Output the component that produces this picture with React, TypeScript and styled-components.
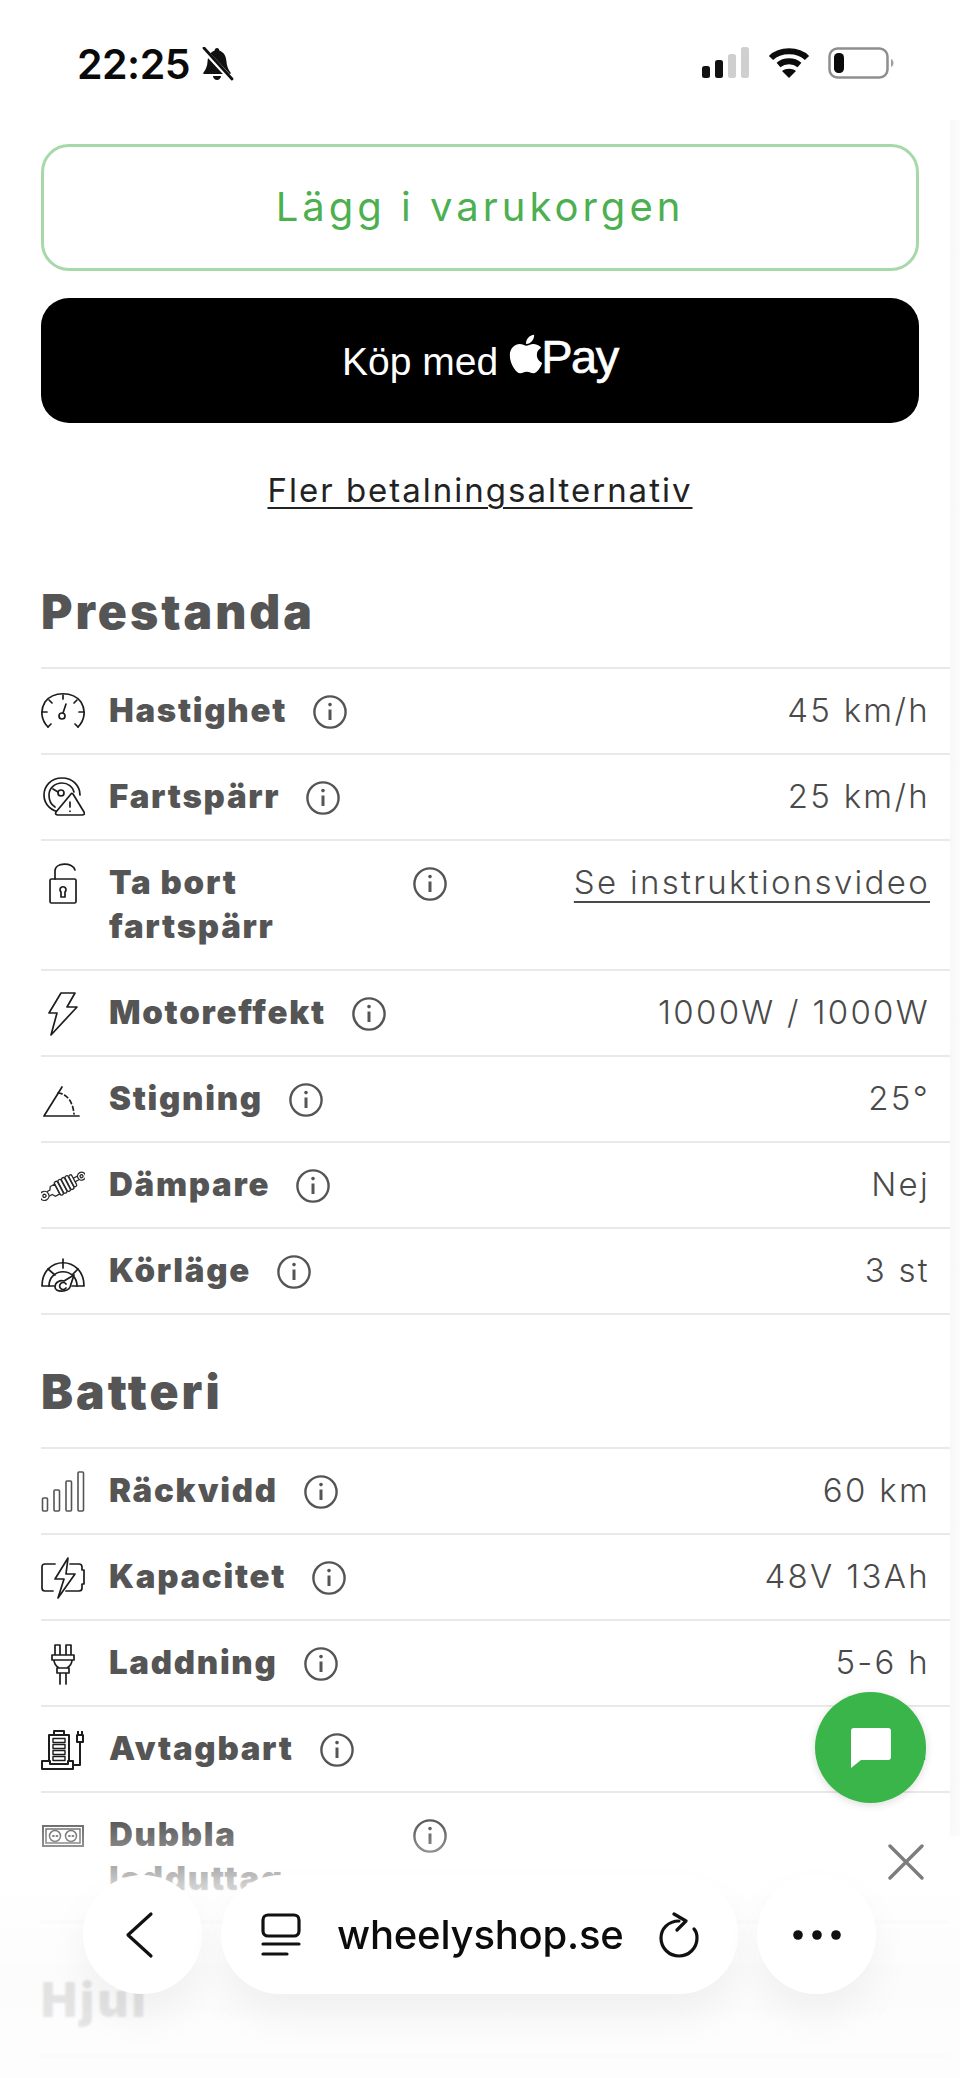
import React from "react";
import styled, { createGlobalStyle } from "styled-components";
import { FaApple } from "react-icons/fa";

const GlobalStyle = createGlobalStyle`
  html, body {
    margin: 0;
    padding: 0;
    background: #fff;
  }
  * { box-sizing: border-box; }
`;

const Page = styled.div`
  position: relative;
  width: 960px;
  height: 2078px;
  overflow: hidden;
  padding: 0 10px 0 41px;
  background: #fff;
  font-family: Inter, "Liberation Sans", sans-serif;
`;

const ScrollTrack = styled.div`
  position: absolute;
  top: 120px;
  right: 0;
  width: 10px;
  height: 1716px;
  background: linear-gradient(90deg, #f8f8f8, #fbfbfb);
`;

const StatusBar = styled.div`
  display: flex;
  align-items: flex-start;
  justify-content: space-between;
  height: 144px;
  padding: 40px 56px 0 36px;
`;

const Clock = styled.div`
  display: flex;
  align-items: center;
  gap: 10px;
  font-size: 41px;
  line-height: 48px;
  font-weight: 600;
  color: #0a0a0a;
  letter-spacing: -0.5px;
`;

const StatusIcons = styled.div`
  display: flex;
  align-items: center;
  gap: 18px;
  padding-top: 7px;
`;

const AddButton = styled.button`
  display: block;
  width: 878px;
  height: 127px;
  padding-bottom: 4px;
  border: 3px solid #a6d8a9;
  border-radius: 28px;
  background: #fff;
  color: #4caf50;
  font-family: inherit;
  font-size: 40px;
  font-weight: 400;
  letter-spacing: 4px;
`;

const PayButton = styled.button`
  display: flex;
  align-items: center;
  justify-content: center;
  width: 878px;
  height: 125px;
  margin-top: 27px;
  border: 0;
  border-radius: 28px;
  background: #000;
  color: #fff;
  font-family: "Liberation Sans", Arial, sans-serif;
  font-size: 39px;
`;

const PayLabel = styled.span`
  margin-top: 3px;
`;

const AppleMark = styled(FaApple)`
  width: 40px;
  height: 44px;
  margin: -14px -5px 0 8px;
`;

const PayWord = styled.span`
  font-size: 47px;
  margin-top: -9px;
  letter-spacing: -1.4px;
  -webkit-text-stroke: 0.7px #fff;
`;

const MoreLink = styled.a`
  display: block;
  width: 878px;
  height: 112px;
  padding-top: 42px;
  text-align: center;
  color: #222;
  font-size: 33px;
  line-height: 50px;
  letter-spacing: 2px;
  text-decoration: underline;
  text-decoration-thickness: 2px;
  text-underline-offset: 5px;
`;

const SectionTitle = styled.h2`
  margin: 0;
  height: 132px;
  padding-top: 49px;
  font-size: 48px;
  line-height: 56px;
  font-weight: 900;
  color: #555;
  letter-spacing: 3px;
`;

const SpecList = styled.div`
  border-top: 2px solid #e9e9e9;
`;

const SpecRow = styled.div`
  display: flex;
  align-items: flex-start;
  padding: 21px 20px 19px 0;
  border-bottom: 2px solid #e9e9e9;
`;

const SpecIconBox = styled.div`
  flex: 0 0 44px;
  display: flex;
  align-items: center;
  justify-content: center;
  height: 44px;
  margin-right: 24px;
`;

const SpecLabel = styled.div`
  max-width: 278px;
  margin: -2px 0 2px;
  font-size: 33px;
  line-height: 44px;
  font-weight: 900;
  color: #555;
  letter-spacing: 1.7px;
`;

const InfoBox = styled.div`
  flex: 0 0 34px;
  height: 43px;
  display: flex;
  align-items: center;
  margin-left: 26px;
`;

const SpecValue = styled.div<{ $link?: boolean }>`
  margin: -2px 0 2px auto;
  font-size: 33px;
  line-height: 44px;
  font-weight: 300;
  color: #4a4a4a;
  letter-spacing: 2.3px;
  text-align: right;
  text-decoration: ${(p) => (p.$link ? "underline" : "none")};
  text-decoration-thickness: 2px;
  text-underline-offset: 7px;
`;

const ChatBubble = styled.div`
  position: absolute;
  left: 815px;
  top: 1692px;
  width: 111px;
  height: 111px;
  display: flex;
  align-items: center;
  justify-content: center;
  border-radius: 50%;
  background: #39b54a;
  box-shadow: 0 2px 8px rgba(0, 0, 0, 0.14);
`;

const BrowserChrome = styled.div`
  position: absolute;
  left: 0;
  right: 0;
  bottom: 0;
  height: 260px;
  display: flex;
  gap: 19px;
  padding: 57px 0 0 83px;
  background: linear-gradient(
    180deg,
    rgba(255, 255, 255, 0) 0%,
    rgba(255, 255, 255, 0.2) 8%,
    rgba(255, 255, 255, 0.72) 26%,
    rgba(252, 252, 252, 0.84) 60%,
    rgba(253, 253, 253, 0.88) 100%
  );
  &::before {
    content: "";
    position: absolute;
    inset: 0;
    backdrop-filter: blur(1px);
    mask-image: linear-gradient(180deg, transparent 20%, #000 40%);
  }
`;

const RoundButton = styled.div<{ $nudge?: number }>`
  position: relative;
  width: 119px;
  height: 119px;
  display: flex;
  align-items: center;
  justify-content: center;
  padding-right: ${(p) => p.$nudge ?? 0}px;
  border-radius: 50%;
  background: #fff;
  box-shadow: 0 22px 44px rgba(0, 0, 0, 0.05);
`;

const UrlPill = styled.div`
  position: relative;
  width: 517px;
  height: 119px;
  display: flex;
  align-items: center;
  padding: 0 39px 0 40px;
  border-radius: 60px;
  background: #fff;
  box-shadow: 0 22px 44px rgba(0, 0, 0, 0.05);
`;

const UrlText = styled.span`
  margin: 0 auto 0 36px;
  font-size: 40px;
  font-weight: 500;
  color: #0c0c0c;
  letter-spacing: -0.2px;
`;

const CloseMark = styled.svg`
  position: absolute;
  top: 26px;
  right: 36px;
`;

const specStroke = { fill: "none", stroke: "#1d1d1d", strokeWidth: 1.7, strokeLinecap: "round", strokeLinejoin: "round" } as const;

const Gauge = () => (
  <svg width="44" height="44" viewBox="0 0 44 44" {...specStroke}>
    <path d="M7 37 C0 30 -1 20 4 12 C12 1 32 1 40 12 C45 20 44 30 37 37" />
    <path d="M7 37l3-3M37 37l-3-3M22 5v4M1 22h5M43 22h-5M8 10l3 3M36 10l-3 3" />
    <circle cx="21" cy="26" r="3" />
    <path d="M22 23l3-9" />
  </svg>
);

const GaugeWarn = () => (
  <svg width="44" height="44" viewBox="0 0 44 44" {...specStroke}>
    <path d="M21 36C10 36 3 28 3 19S10 2 21 2s18 8 18 17" />
    <path d="M14 31C9 28 8 24 8 19c0-7 6-12 13-12 6 0 11 4 12 9" />
    <circle cx="20" cy="17" r="3" />
    <path d="M17 16l-5-3" />
    <path d="M30 18L15 36c-1 2 0 3 2 3h24c2 0 3-1 2-3L32 18c-1-1-2-1-2 0z" fill="#fff" />
    <path d="M29 26v5M29 35v.3" />
  </svg>
);

const OpenLock = () => (
  <svg width="44" height="44" viewBox="0 0 44 44" {...specStroke}>
    <rect x="9" y="17" width="26" height="24" rx="1.5" />
    <path d="M14 17V9c0-9 18-9 20-1" />
    <path d="M20 35h4v-5a3 3 0 1 0-4 0z" />
  </svg>
);

const Bolt = () => (
  <svg width="44" height="44" viewBox="0 0 44 44" {...specStroke}>
    <path d="M20 1h14l-8 14h10L10 43l6-22H8z" />
  </svg>
);

const Slope = () => (
  <svg width="44" height="44" viewBox="0 0 44 44" {...specStroke}>
    <path d="M3 38h35M3 38L21 9" />
    <path d="M17 15c10 1 15 10 16 21" strokeDasharray="4 3" />
  </svg>
);

const Damper = () => (
  <svg width="44" height="44" viewBox="0 0 44 44" fill="none" stroke="#2a2a2a" strokeWidth="1.3" strokeLinecap="round">
    <g transform="rotate(-28 22 22)">
      <circle cx="1" cy="22" r="4.500" />
      <circle cx="1" cy="22" r="1.600" />
      <circle cx="43" cy="22" r="4" />
      <circle cx="43" cy="22" r="1.500" />
      <path d="M5.500 19.500h3l2-3h5v11h-5l-2-3h-3" />
      <rect x="15.500" y="14.500" width="3.600" height="15" rx="1.800" />
      <rect x="19.500" y="14.500" width="3.600" height="15" rx="1.800" />
      <rect x="23.500" y="14.500" width="3.600" height="15" rx="1.800" />
      <rect x="27.500" y="14.500" width="3.600" height="15" rx="1.800" />
      <rect x="31.500" y="15.500" width="3.200" height="13" rx="1.600" />
      <path d="M35 20h4M35 24h4" />
    </g>
  </svg>
);

const ModeDial = () => (
  <svg width="44" height="44" viewBox="0 0 44 44" {...specStroke}>
    <path d="M1 36C1 5 43 5 43 36h-12M1 36h12" />
    <path d="M8 36C8 17 36 17 36 36M22 9v9M7 19l7 6M37 19l-6 6" />
    <path d="M14 37c0-5 5-7 9-6l10-6-4 12c-2 5-15 6-15 0z" fill="#fff" />
    <path d="M25 34a3.5 3.5 0 1 0 0 4" />
  </svg>
);

const RangeBars = () => (
  <svg width="44" height="44" viewBox="0 0 44 44" fill="none" stroke="#555" strokeWidth="1.6">
    <rect x="1.5" y="28" width="5" height="13" rx="1" />
    <rect x="13" y="20" width="5.5" height="21" rx="1" />
    <rect x="25" y="11" width="5.5" height="30" rx="1" />
    <rect x="37" y="2" width="5.5" height="39" rx="1" />
  </svg>
);

const BatteryBolt = () => (
  <svg width="44" height="44" viewBox="0 0 44 44" {...specStroke}>
    <path d="M14 8H4c-2 0-3 1-3 3v21c0 2 1 3 3 3h8M29 8h9c2 0 3 1 3 3v3h2v14h-2v4c0 2-1 3-3 3H25" />
    <path d="M27 2L14 23h9l-6 19 17-24h-9z" />
  </svg>
);

const Plug = () => (
  <svg width="44" height="44" viewBox="0 0 44 44" {...specStroke}>
    <path d="M14 13V3h5v10M25 13V3h5v10M11 13h22v5H11zM13 18c0 4 2 6 5 8h8c3-2 5-4 5-8M16 26h12v5H16zM19 31v11M25 31v11" />
  </svg>
);

const DockBattery = () => (
  <svg width="44" height="44" viewBox="0 0 44 44" fill="none" stroke="#1d1d1d" strokeWidth="2" strokeLinejoin="round">
    <path d="M8 33V7h20v26M13 7V3h10v4" />
    <rect x="12" y="10.500" width="12" height="4" strokeWidth="1.400" />
    <rect x="12" y="16.500" width="12" height="4" strokeWidth="1.400" />
    <rect x="12" y="22.500" width="12" height="4" strokeWidth="1.400" />
    <rect x="12" y="28.500" width="12" height="4" strokeWidth="1.400" />
    <path d="M1 33h8v3h18v-3h5v8H1zM32 37h7V14M36 14h6V7h-6zM37 7V3M41 7V3" />
  </svg>
);

const DoubleSocket = () => (
  <svg width="44" height="44" viewBox="0 0 44 44" fill="none" stroke="#666" strokeWidth="1.5">
    <rect x="2" y="12" width="40" height="20" strokeWidth="2" />
    <rect x="5" y="15" width="34" height="14" />
    <circle cx="14" cy="22" r="5.5" />
    <circle cx="30" cy="22" r="5.5" />
    <path d="M12 22h.8M15.5 22h.8M28 22h.8M31.5 22h.8" strokeWidth="2" strokeLinecap="round" />
  </svg>
);

const InfoIcon = () => (
  <svg width="34" height="34" viewBox="0 0 34 34" fill="none" stroke="#555" strokeWidth="2.4">
    <circle cx="17" cy="17" r="15.6" />
    <path d="M17 14.5V25" strokeWidth="3" />
    <circle cx="17" cy="9.6" r="1.8" fill="#555" stroke="none" />
  </svg>
);

const BellOff = () => (
  <svg width="34" height="34" viewBox="0 0 34 34">
    <path d="M17 1c-1.400 0-2.300 1-2.300 2.400C10 5 8 9 7.600 14c-.3 5-1.500 8-4.100 11.500-.6 1 0 1.500 1 1.500h25c1 0 1.600-.5 1-1.500C28 22 26.800 19 26.400 14 26 9 24 5 19.300 3.400 19.300 2 18.400 1 17 1z" fill="#111" />
    <path d="M13 29h8c0 2-1.800 4-4 4s-4-2-4-4z" fill="#111" />
    <path d="M3 2l28 30" stroke="#fff" strokeWidth="5" />
    <path d="M4 1l28 31" stroke="#111" strokeWidth="2.800" strokeLinecap="round" />
  </svg>
);

const SignalIcon = () => (
  <svg width="48" height="32" viewBox="0 0 48 32">
    <rect x="0" y="19" width="8" height="12" rx="2.500" fill="#111" />
    <rect x="13" y="13" width="8" height="18" rx="2.500" fill="#111" />
    <rect x="26" y="7" width="8" height="24" rx="2.500" fill="#cfcfcf" />
    <rect x="39" y="0" width="8" height="31" rx="2.500" fill="#cfcfcf" />
  </svg>
);

const WifiIcon = () => (
  <svg width="42" height="32" viewBox="0 0 42 32" fill="none" stroke="#0c0c0c" strokeWidth="6">
    <path d="M3 11C12 2 30 2 39 11" />
    <path d="M10.500 18c6-5 15-5 21 0" />
    <path d="M21 31l-7-7c4-3 10-3 14 0z" fill="#0c0c0c" stroke="none" />
  </svg>
);

const BatteryIcon = () => (
  <svg width="66" height="32" viewBox="0 0 66 32">
    <rect x="1.500" y="1.500" width="58" height="29" rx="8" fill="none" stroke="#8e8e8e" strokeWidth="2.500" />
    <rect x="6" y="6" width="10" height="20" rx="4.500" fill="#0a0a0a" />
    <path d="M63 12c2 1 2.500 2.500 2.500 4s-.5 3-2.500 4z" fill="#a0a0a0" />
  </svg>
);

const BackIcon = () => (
  <svg width="30" height="48" viewBox="0 0 30 48" fill="none" stroke="#111" strokeWidth="3.200" strokeLinecap="round" strokeLinejoin="round">
    <path d="M26 3L3 24l23 21" />
  </svg>
);

const TabsIcon = () => (
  <svg width="40" height="44" viewBox="0 0 40 44" fill="none" stroke="#111" strokeWidth="3.200" strokeLinecap="round">
    <rect x="2" y="2" width="36" height="21" rx="5" />
    <path d="M2 31h36M2 41h24" />
  </svg>
);

const ReloadIcon = () => (
  <svg width="40" height="46" viewBox="0 0 40 46" fill="none" stroke="#111" strokeWidth="3.200" strokeLinecap="round" strokeLinejoin="round">
    <path d="M20 9C9 9 2 17 2 26c0 10 8 18 18 18s18-8 18-18c0-4-1-7-3-9" />
    <path d="M15 2l12 7-9 9" />
  </svg>
);

const DotsIcon = () => (
  <svg width="50" height="12" viewBox="0 0 50 12" fill="#111">
    <circle cx="6" cy="6" r="4.800" />
    <circle cx="25" cy="6" r="4.800" />
    <circle cx="44" cy="6" r="4.800" />
  </svg>
);

const ChatIcon = () => (
  <svg width="42" height="42" viewBox="0 0 42 42">
    <path d="M4 1h34c2 0 3 1 3 3v26c0 2-1 3-3 3H11L1 41V4c0-2 1-3 3-3z" fill="#fff" />
  </svg>
);

type Spec = {
  icon: React.ReactNode;
  label: string;
  value?: string;
  link?: boolean;
};

const performance: Spec[] = [
  { icon: <Gauge />, label: "Hastighet", value: "45 km/h" },
  { icon: <GaugeWarn />, label: "Fartspärr", value: "25 km/h" },
  { icon: <OpenLock />, label: "Ta bort fartspärr", value: "Se instruktionsvideo", link: true },
  { icon: <Bolt />, label: "Motoreffekt", value: "1000W / 1000W" },
  { icon: <Slope />, label: "Stigning", value: "25°" },
  { icon: <Damper />, label: "Dämpare", value: "Nej" },
  { icon: <ModeDial />, label: "Körläge", value: "3 st" },
];

const battery: Spec[] = [
  { icon: <RangeBars />, label: "Räckvidd", value: "60 km" },
  { icon: <BatteryBolt />, label: "Kapacitet", value: "48V 13Ah" },
  { icon: <Plug />, label: "Laddning", value: "5-6 h" },
  { icon: <DockBattery />, label: "Avtagbart", value: "Ja" },
  { icon: <DoubleSocket />, label: "Dubbla ladduttag" },
];

function Specs({ items }: { items: Spec[] }) {
  return (
    <SpecList>
      {items.map((s) => (
        <SpecRow key={s.label}>
          <SpecIconBox>{s.icon}</SpecIconBox>
          <SpecLabel>{s.label}</SpecLabel>
          <InfoBox>
            <InfoIcon />
          </InfoBox>
          {s.value && <SpecValue $link={s.link}>{s.value}</SpecValue>}
        </SpecRow>
      ))}
    </SpecList>
  );
}

export default function App() {
  return (
    <Page>
      <GlobalStyle />
      <StatusBar>
        <Clock>
          22:25
          <BellOff />
        </Clock>
        <StatusIcons>
          <SignalIcon />
          <WifiIcon />
          <BatteryIcon />
        </StatusIcons>
      </StatusBar>

      <AddButton>Lägg i varukorgen</AddButton>
      <PayButton>
        <PayLabel>Köp med</PayLabel>
        <AppleMark />
        <PayWord>Pay</PayWord>
      </PayButton>
      <MoreLink>Fler betalningsalternativ</MoreLink>

      <SectionTitle>Prestanda</SectionTitle>
      <Specs items={performance} />
      <SectionTitle>Batteri</SectionTitle>
      <Specs items={battery} />
      <SectionTitle>Hjul</SectionTitle>
      <SpecList />

      <ScrollTrack />
      <ChatBubble>
        <ChatIcon />
      </ChatBubble>

      <BrowserChrome>
        <RoundButton $nudge={6}>
          <BackIcon />
        </RoundButton>
        <UrlPill>
          <TabsIcon />
          <UrlText>wheelyshop.se</UrlText>
          <ReloadIcon />
        </UrlPill>
        <RoundButton>
          <DotsIcon />
        </RoundButton>
        <CloseMark width="36" height="36" viewBox="0 0 36 36" stroke="#7c7c7c" strokeWidth="3.400" strokeLinecap="round">
          <path d="M2 2l32 32M34 2L2 34" />
        </CloseMark>
      </BrowserChrome>
    </Page>
  );
}
